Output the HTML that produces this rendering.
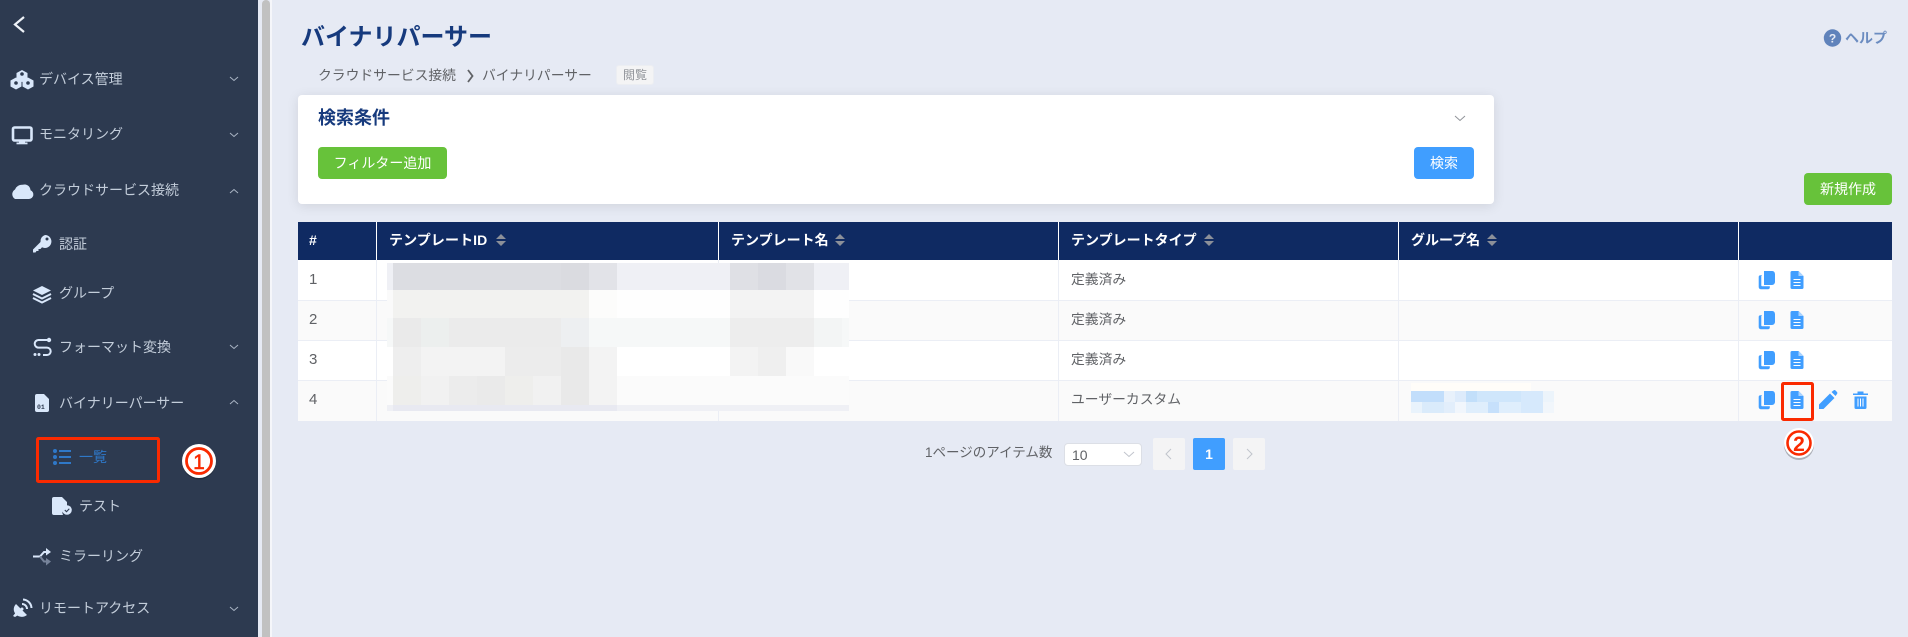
<!DOCTYPE html>
<html lang="ja"><head><meta charset="utf-8"><title>バイナリパーサー</title>
<style>
html,body{margin:0;padding:0}
body{width:1908px;height:637px;position:relative;overflow:hidden;background:#e6eaf4;font-family:"Liberation Sans","Noto Sans CJK JP",sans-serif;color:#606266}
.a,.t{position:absolute}
.t{white-space:nowrap;line-height:20px;font-size:14px}
.s{color:#c3cdda;font-size:14px}
.h{color:#fff;font-weight:700;font-size:14px}
.btn{position:absolute;border-radius:4px;color:#fff;font-size:14px;text-align:center;height:32px;line-height:32px}
svg{position:absolute;left:0;top:0}
</style></head><body>
<div class="a" style="left:0;top:0;width:258px;height:637px;background:#2d3a50"></div>
<div class="a" style="left:262px;top:0;width:8px;height:637px;background:#c1c1c1;border-radius:4px 4px 0 0"></div>
<div class="a" style="left:270px;top:0;width:2px;height:637px;background:#f5f6fa"></div>

<div class="t s" style="left:39px;top:69px">デバイス管理</div>
<div class="t s" style="left:39px;top:124px">モニタリング</div>
<div class="t s" style="left:39px;top:180px">クラウドサービス接続</div>
<div class="t s" style="left:59px;top:234px">認証</div>
<div class="t s" style="left:59px;top:283px">グループ</div>
<div class="t s" style="left:59px;top:337px">フォーマット変換</div>
<div class="t s" style="left:59px;top:393px">バイナリーパーサー</div>
<div class="t s" style="left:79px;top:447px;color:#2f78c8">一覧</div>
<div class="t s" style="left:79px;top:496px">テスト</div>
<div class="t s" style="left:59px;top:546px">ミラーリング</div>
<div class="t s" style="left:39px;top:598px">リモートアクセス</div>

<div class="t" style="left:301px;top:22px;font-size:24px;font-weight:700;color:#163a7d;line-height:32px">バイナリパーサー</div>
<div class="t" style="left:318px;top:66px;font-size:13.8px">クラウドサービス接続</div>
<div class="t" style="left:482px;top:66px;font-size:13.8px">バイナリパーサー</div>
<div class="a" style="left:616px;top:65px;width:38px;height:20px;background:#f4f4f5;border:1px solid #eceef2;box-sizing:border-box;border-radius:3px;color:#909399;font-size:12px;line-height:18px;text-align:center">閲覧</div>
<div class="t" style="left:1845px;top:28px;font-size:14px;font-weight:700;color:#6b8cc0">ヘルプ</div>

<div class="a" style="left:298px;top:95px;width:1196px;height:109px;background:#fff;border-radius:4px;box-shadow:0 2px 12px rgba(0,0,0,.1)"></div>
<div class="t" style="left:318px;top:108px;font-size:18px;font-weight:700;color:#163a7d">検索条件</div>
<div class="btn" style="left:318px;top:147px;width:129px;background:#67c23a">フィルター追加</div>
<div class="btn" style="left:1414px;top:147px;width:60px;background:#409eff">検索</div>
<div class="btn" style="left:1804px;top:173px;width:88px;background:#67c23a">新規作成</div>

<!-- table -->
<div class="a" style="left:298px;top:222px;width:1594px;height:38px;background:#0f2a62"></div>
<div class="a" style="left:298px;top:260px;width:1594px;height:40px;background:#fff"></div>
<div class="a" style="left:298px;top:300px;width:1594px;height:40px;background:#fafafa"></div>
<div class="a" style="left:298px;top:340px;width:1594px;height:40px;background:#fff"></div>
<div class="a" style="left:298px;top:380px;width:1594px;height:41px;background:#fafafa"></div>
<div class="a" style="left:298px;top:300px;width:1594px;height:1px;background:#ebeef5"></div>
<div class="a" style="left:298px;top:340px;width:1594px;height:1px;background:#ebeef5"></div>
<div class="a" style="left:298px;top:380px;width:1594px;height:1px;background:#ebeef5"></div>
<div class="a" style="left:376px;top:222px;width:1px;height:38px;background:#fff"></div>
<div class="a" style="left:718px;top:222px;width:1px;height:38px;background:#fff"></div>
<div class="a" style="left:1058px;top:222px;width:1px;height:38px;background:#fff"></div>
<div class="a" style="left:1398px;top:222px;width:1px;height:38px;background:#fff"></div>
<div class="a" style="left:1738px;top:222px;width:1px;height:38px;background:#fff"></div>
<div class="a" style="left:376px;top:260px;width:1px;height:161px;background:#ebeef5"></div>
<div class="a" style="left:718px;top:260px;width:1px;height:161px;background:#ebeef5"></div>
<div class="a" style="left:1058px;top:260px;width:1px;height:161px;background:#ebeef5"></div>
<div class="a" style="left:1398px;top:260px;width:1px;height:161px;background:#ebeef5"></div>
<div class="a" style="left:1738px;top:260px;width:1px;height:161px;background:#ebeef5"></div>

<div class="t h" style="left:309px;top:230px">#</div>
<div class="t h" style="left:389px;top:230px;letter-spacing:.1px">テンプレートID</div>
<div class="t h" style="left:731px;top:230px">テンプレート名</div>
<div class="t h" style="left:1071px;top:230px">テンプレートタイプ</div>
<div class="t h" style="left:1411px;top:230px">グループ名</div>

<div class="t" style="left:309px;top:270px;font-size:15px">1</div>
<div class="t" style="left:309px;top:310px;font-size:15px">2</div>
<div class="t" style="left:309px;top:350px;font-size:15px">3</div>
<div class="t" style="left:309px;top:390px;font-size:15px">4</div>
<div class="t" style="left:1071px;top:270px;font-size:13.8px">定義済み</div>
<div class="t" style="left:1071px;top:310px;font-size:13.8px">定義済み</div>
<div class="t" style="left:1071px;top:350px;font-size:13.8px">定義済み</div>
<div class="t" style="left:1071px;top:390px;font-size:13.8px">ユーザーカスタム</div>

<!-- pagination -->
<div class="t" style="left:925px;top:443px;font-size:13.5px">1ページのアイテム数</div>
<div class="a" style="left:1064px;top:443px;width:78px;height:23px;background:#fff;border:1px solid #dcdfe6;box-sizing:border-box;border-radius:4px"></div>
<div class="t" style="left:1072px;top:445px;font-size:14px">10</div>
<div class="a" style="left:1153px;top:438px;width:32px;height:32px;background:#f4f4f5;border-radius:2px"></div>
<div class="a" style="left:1193px;top:438px;width:32px;height:32px;background:#409eff;border-radius:2px;color:#fff;font-weight:700;font-size:14px;line-height:32px;text-align:center">1</div>
<div class="a" style="left:1233px;top:438px;width:32px;height:32px;background:#f4f4f5;border-radius:2px"></div>

<svg width="1908" height="637" viewBox="0 0 1908 637">
<!-- blur template -->
<g shape-rendering="crispEdges">
<rect x="387" y="263" width="462" height="27" fill="#eff0f5"/>
<rect x="393" y="263" width="168" height="27" fill="#dcdde2"/><rect x="561" y="263" width="28" height="27" fill="#dadbe0"/><rect x="589" y="263" width="28" height="27" fill="#e2e3e8"/>
<rect x="730" y="263" width="28" height="27" fill="#dfe0e5"/><rect x="758" y="263" width="28" height="27" fill="#dadbe1"/><rect x="786" y="263" width="28" height="27" fill="#e1e2e7"/>
<rect x="387" y="290" width="462" height="28" fill="#fefefe"/>
<rect x="387" y="290" width="6" height="28" fill="#fafafa"/><rect x="393" y="290" width="196" height="28" fill="#f2f2f0"/><rect x="589" y="290" width="28" height="28" fill="#fcfcfb"/>
<rect x="730" y="290" width="84" height="28" fill="#f3f3f3"/>
<rect x="387" y="318" width="462" height="29" fill="#f6f8f8"/>
<rect x="393" y="318" width="28" height="29" fill="#eaeaea"/><rect x="421" y="318" width="28" height="29" fill="#ecefee"/><rect x="449" y="318" width="112" height="29" fill="#ebebeb"/><rect x="561" y="318" width="28" height="29" fill="#edeff1"/>
<rect x="730" y="318" width="84" height="29" fill="#ededed"/><rect x="814" y="318" width="28" height="29" fill="#f3f5f5"/>
<rect x="387" y="347" width="462" height="29" fill="#ffffff"/>
<rect x="393" y="347" width="28" height="29" fill="#eeeeee"/><rect x="421" y="347" width="84" height="29" fill="#f3f3f3"/><rect x="505" y="347" width="56" height="29" fill="#ececec"/><rect x="561" y="347" width="28" height="29" fill="#e9e9e9"/><rect x="589" y="347" width="28" height="29" fill="#f3f3f3"/>
<rect x="730" y="347" width="28" height="29" fill="#f3f3f3"/><rect x="758" y="347" width="28" height="29" fill="#efefef"/><rect x="786" y="347" width="28" height="29" fill="#f9f9f9"/>
<rect x="387" y="376" width="462" height="29" fill="#fbfbfb"/>
<rect x="393" y="376" width="28" height="29" fill="#eeeeec"/><rect x="421" y="376" width="28" height="29" fill="#f1f1f1"/><rect x="449" y="376" width="28" height="29" fill="#ececec"/><rect x="477" y="376" width="28" height="29" fill="#eaeaea"/><rect x="505" y="376" width="28" height="29" fill="#eeeeec"/><rect x="533" y="376" width="28" height="29" fill="#f1f1f1"/><rect x="561" y="376" width="28" height="29" fill="#e9e9e9"/><rect x="589" y="376" width="28" height="29" fill="#f3f3f3"/>
<rect x="387" y="405" width="462" height="6" fill="#eff0f5"/><rect x="393" y="405" width="224" height="6" fill="#e8e9f1"/>
<!-- blur group -->
<rect x="1411" y="383" width="120" height="8" fill="#fffdf9"/>
<rect x="1411" y="391" width="33" height="11" fill="#c2defb"/><rect x="1444" y="391" width="11" height="11" fill="#e8f1fb"/><rect x="1455" y="391" width="11" height="11" fill="#ddebfb"/><rect x="1466" y="391" width="11" height="11" fill="#c2dffa"/><rect x="1477" y="391" width="44" height="11" fill="#cfe6fb"/><rect x="1521" y="391" width="22" height="11" fill="#d6e9fc"/><rect x="1543" y="391" width="11" height="11" fill="#ecf4fb"/>
<rect x="1411" y="402" width="11" height="11" fill="#e9f3fc"/><rect x="1422" y="402" width="22" height="11" fill="#daebfb"/><rect x="1444" y="402" width="11" height="11" fill="#e2eefb"/><rect x="1455" y="402" width="11" height="11" fill="#f1f6fc"/><rect x="1466" y="402" width="22" height="11" fill="#dfeefc"/><rect x="1488" y="402" width="11" height="11" fill="#c6e0fb"/><rect x="1499" y="402" width="22" height="11" fill="#dfeefc"/><rect x="1521" y="402" width="22" height="11" fill="#d6e9fc"/><rect x="1543" y="402" width="11" height="11" fill="#f1f6fb"/>
</g>

<!-- back -->
<path d="M24 17l-9 7.500 9 7.500" fill="none" stroke="#eef2f8" stroke-width="2.200"/>
<!-- chevrons -->
<g fill="none" stroke="#aab5c4" stroke-width="1">
<path d="M230 77l4 3.500 4-3.500"/><path d="M230 133l4 3.500 4-3.500"/><path d="M230 193l4-3.500 4 3.500"/><path d="M230 345l4 3.500 4-3.500"/><path d="M230 404l4-3.500 4 3.500"/><path d="M230 607l4 3.500 4-3.500"/>
<path d="M1455 116l5 4.500 5-4.500" stroke="#909399"/>
<path d="M1124 452l5 4.500 5-4.500" stroke="#c0c4cc"/>
<path d="M1171 449l-5 5 5 5" stroke="#c0c4cc"/>
<path d="M1247 449l5 5-5 5" stroke="#c0c4cc"/>
</g>
<path d="M468 70l4.500 6-4.500 6" fill="none" stroke="#606266" stroke-width="1.800"/>

<!-- sidebar icons -->
<g fill="#d9e7fa">
<path d="M22 70l5.500 3v6l-5.500 3-5.500-3v-6z"/><path d="M16 77.500l5.500 3v6l-5.500 3-5.500-3v-6z"/><path d="M28 77.500l5.500 3v6l-5.500 3-5.500-3v-6z"/>
<circle cx="22" cy="74" r="1.800" fill="#2d3a50"/><circle cx="16" cy="83" r="1.800" fill="#2d3a50"/><circle cx="28" cy="83" r="1.800" fill="#2d3a50"/>
<rect x="13" y="127.500" width="18.500" height="13" rx="1.500" fill="none" stroke="#d9e7fa" stroke-width="2.600"/>
<rect x="19" y="141" width="6" height="2"/><rect x="16.500" y="142.500" width="11" height="1.800"/>
<path d="M15 199h14a4.500 4.500 0 0 0 1.500-8.700a6 6 0 0 0-8-5.500a7.500 7.500 0 0 0-7.500 4.700a5.500 5.500 0 0 0 0 9.500z"/>
<path d="M45 235a6.500 6.500 0 1 1-3 12.300l-1.500 1.700h-2v2h-2l-1 1.500h-2.500v-3l7.500-7.500A6.500 6.500 0 0 1 45 235z"/>
<circle cx="47" cy="239" r="1.500" fill="#2d3a50"/>
<path d="M42 286l9 4.500-9 4.500-9-4.500z"/>
<path d="M33 294l9 4.500 9-4.500M33 298l9 4.500 9-4.500" fill="none" stroke="#d9e7fa" stroke-width="2"/>
<path d="M47 340H38.500a3.800 3.800 0 0 0 0 7.600H47a3.700 3.700 0 0 1 0 7.400H43" fill="none" stroke="#d9e7fa" stroke-width="2"/>
<circle cx="49" cy="340" r="2.200"/><circle cx="35" cy="354.500" r="1.500"/><circle cx="39" cy="354.500" r="1.500"/>
<path d="M37 394h7l5 5v11a2 2 0 0 1-2 2H37a2 2 0 0 1-2-2v-14a2 2 0 0 1 2-2z"/>
<text x="37" y="409" font-family="'Liberation Mono',monospace" font-size="6.500" font-weight="700" fill="#2d3a50">01</text>
<path d="M53 497h8l5 5v4.500a6 6 0 0 0-4 8.500h-9a2 2 0 0 1-2-2v-14a2 2 0 0 1 2-2z" transform="translate(1 0)"/>
<circle cx="67" cy="510" r="4.800" fill="#d9e7fa"/><path d="M64.800 510l1.700 1.700 2.800-3" fill="none" stroke="#2d3a50" stroke-width="1.100"/>
<path d="M33 556.500h7l4-4.500h3" fill="none" stroke="#d9e7fa" stroke-width="2"/><path d="M46 548l5 4-5 3.500z"/>
<path d="M40 556.500l4 5h3" fill="none" stroke="#76839a" stroke-width="2"/><path d="M46 558l5 3.500-5 4z" fill="#76839a"/>
<path d="M16 604l11 11c-3 2.500-8 2.500-11-.5s-3-7.500 0-10.500z"/>
<path d="M13 616l4-5 3 3-5 3z"/>
<path d="M22 604a5 5 0 0 1 5 5M23 599.500a9 9 0 0 1 8.500 8.500" fill="none" stroke="#d9e7fa" stroke-width="2"/>
<circle cx="22" cy="609" r="1.500"/>
</g>
<g fill="#2f78c8">
<circle cx="55" cy="451" r="2"/><circle cx="55" cy="457" r="2"/><circle cx="55" cy="463" r="2"/>
<rect x="59" y="450" width="12" height="2"/><rect x="59" y="456" width="12" height="2"/><rect x="59" y="462" width="12" height="2"/>
</g>

<!-- carets -->
<g fill="#8c9099">
<path d="M496 239l5-5 5 5zM496 241l5 5 5-5z"/>
<path d="M835 239l5-5 5 5zM835 241l5 5 5-5z"/>
<path d="M1204 239l5-5 5 5zM1204 241l5 5 5-5z"/>
<path d="M1487 239l5-5 5 5zM1487 241l5 5 5-5z"/>
</g>

<!-- help -->
<circle cx="1832.500" cy="38" r="8.700" fill="#6083bb"/>
<text x="1832.500" y="42.500" text-anchor="middle" font-size="12" font-weight="700" fill="#e6eaf4" font-family="Liberation Sans">?</text>

<!-- action icons -->
<defs>
<g id="cp" fill="#409eff"><path d="M1764 271h7.500a3 3 0 0 1 3.500 3v8a3 3 0 0 1-3 3h-8z"/><path d="M1762 275.500h-1.500a1.500 1.500 0 0 0-1.500 1.500v10a2 2 0 0 0 2 2h7a1.500 1.500 0 0 0 1.500-1.500v-1h-7.500a1 1 0 0 1-1-1v-10z" stroke="#409eff" stroke-width=".6"/><rect x="1764" y="271" width="2" height="14"/></g>
<g id="dc"><path d="M1792 271h6.500l5 5v11.500a1.500 1.500 0 0 1-1.500 1.500h-10a1.500 1.500 0 0 1-1.500-1.500v-15a1.500 1.500 0 0 1 1.500-1.500z" fill="#409eff"/><path d="M1798.500 271v5h5z" fill="#a8d2ff"/><path d="M1793.500 279.500h7M1793.500 282.500h7M1793.500 285.500h7" stroke="#fff" stroke-width="1.100"/></g>
</defs>
<use href="#cp"/><use href="#dc"/>
<use href="#cp" y="40"/><use href="#dc" y="40"/>
<use href="#cp" y="80"/><use href="#dc" y="80"/>
<use href="#cp" y="120"/><use href="#dc" y="120"/>
<path d="M1819 409v-4.500l11-11 4.500 4.500-11 11zM1831.500 392l2-1.500a1.500 1.500 0 0 1 2 0l1.500 1.500a1.500 1.500 0 0 1 0 2l-1.500 2z" fill="#409eff"/>
<path d="M1853 393.500h15v1.500h-15zM1857.500 391.500h6v2h-6z" fill="#409eff"/>
<path d="M1854.500 396.500h12v11a1.500 1.500 0 0 1-1.500 1.500h-9a1.500 1.500 0 0 1-1.500-1.500z" fill="#409eff"/>
<path d="M1858 398.500v8M1860.500 398.500v8M1863 398.500v8" stroke="#fff" stroke-width="1"/>

<!-- annotations -->
<rect x="37.500" y="438.500" width="121" height="43" rx="1" fill="none" stroke="#fa2a00" stroke-width="3"/>
<rect x="1782.500" y="383.500" width="30" height="36" rx="1" fill="none" stroke="#fa2a00" stroke-width="3"/>
<circle cx="199" cy="463" r="16.500" fill="#000" opacity=".25"/>
<circle cx="199" cy="461" r="17" fill="#fff"/><circle cx="199" cy="461" r="12.500" fill="#fff" stroke="#fa2a00" stroke-width="2.800"/>
<text x="199" y="469" text-anchor="middle" font-family="Liberation Sans" font-size="21" font-weight="400" stroke="#fa2a00" stroke-width=".5" fill="#fa2a00">1</text>
<circle cx="1799" cy="445" r="15" fill="#000" opacity=".25"/>
<circle cx="1799" cy="443" r="15" fill="#fff"/><circle cx="1799" cy="443" r="11.500" fill="#fff" stroke="#fa2a00" stroke-width="2.600"/>
<text x="1799" y="451" text-anchor="middle" font-family="Liberation Sans" font-size="21" font-weight="700" fill="#fa2a00">2</text>
</svg>
</body></html>
